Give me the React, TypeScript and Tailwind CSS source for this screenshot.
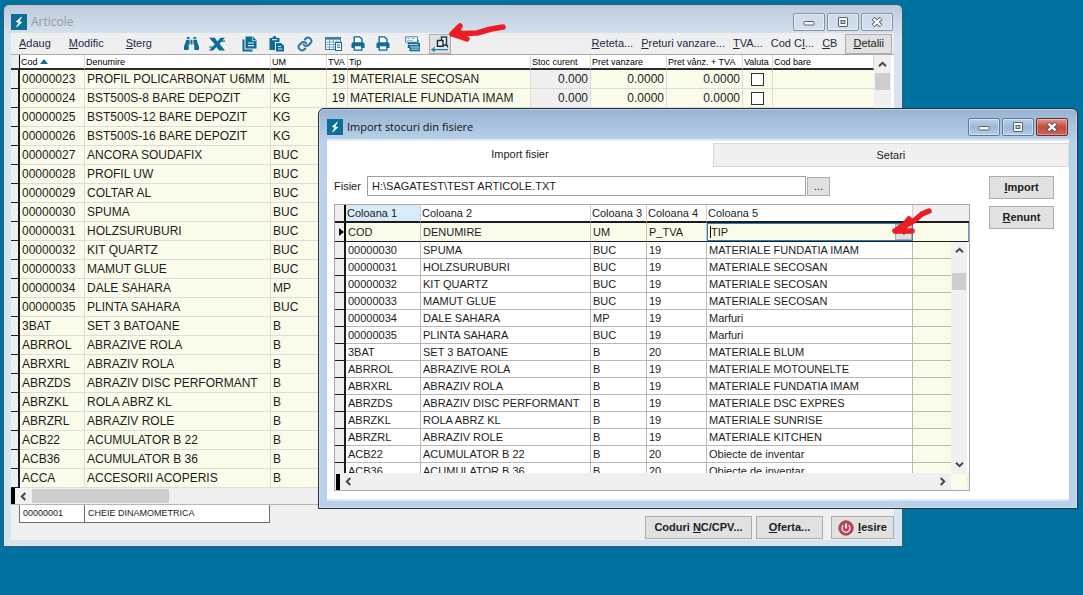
import type { ReactNode } from 'react'
import clsx from 'clsx'
import { FaBinoculars } from 'react-icons/fa'

interface Article {
  code: string
  name: string
  um: string
  vat?: string
  type?: string
  stock?: string
  price?: string
  priceVat?: string
}

interface ImportRow {
  code: string
  name: string
  um: string
  vat: string
  type: string
}

const articles: Article[] = [
  { code: '00000023', name: 'PROFIL POLICARBONAT U6MM', um: 'ML', vat: '19', type: 'MATERIALE SECOSAN', stock: '0.000', price: '0.0000', priceVat: '0.0000' },
  { code: '00000024', name: 'BST500S-8 BARE DEPOZIT', um: 'KG', vat: '19', type: 'MATERIALE FUNDATIA IMAM', stock: '0.000', price: '0.0000', priceVat: '0.0000' },
  { code: '00000025', name: 'BST500S-12 BARE DEPOZIT', um: 'KG' },
  { code: '00000026', name: 'BST500S-16 BARE DEPOZIT', um: 'KG' },
  { code: '00000027', name: 'ANCORA SOUDAFIX', um: 'BUC' },
  { code: '00000028', name: 'PROFIL UW', um: 'BUC' },
  { code: '00000029', name: 'COLTAR AL', um: 'BUC' },
  { code: '00000030', name: 'SPUMA', um: 'BUC' },
  { code: '00000031', name: 'HOLZSURUBURI', um: 'BUC' },
  { code: '00000032', name: 'KIT QUARTZ', um: 'BUC' },
  { code: '00000033', name: 'MAMUT GLUE', um: 'BUC' },
  { code: '00000034', name: 'DALE SAHARA', um: 'MP' },
  { code: '00000035', name: 'PLINTA SAHARA', um: 'BUC' },
  { code: '3BAT', name: 'SET 3 BATOANE', um: 'B' },
  { code: 'ABRROL', name: 'ABRAZIVE ROLA', um: 'B' },
  { code: 'ABRXRL', name: 'ABRAZIV ROLA', um: 'B' },
  { code: 'ABRZDS', name: 'ABRAZIV DISC PERFORMANT', um: 'B' },
  { code: 'ABRZKL', name: 'ROLA ABRZ KL', um: 'B' },
  { code: 'ABRZRL', name: 'ABRAZIV ROLE', um: 'B' },
  { code: 'ACB22', name: 'ACUMULATOR B 22', um: 'B' },
  { code: 'ACB36', name: 'ACUMULATOR B 36', um: 'B' },
  { code: 'ACCA', name: 'ACCESORII ACOPERIS', um: 'B' },
]

const importRows: ImportRow[] = [
  { code: '00000030', name: 'SPUMA', um: 'BUC', vat: '19', type: 'MATERIALE FUNDATIA IMAM' },
  { code: '00000031', name: 'HOLZSURUBURI', um: 'BUC', vat: '19', type: 'MATERIALE SECOSAN' },
  { code: '00000032', name: 'KIT QUARTZ', um: 'BUC', vat: '19', type: 'MATERIALE SECOSAN' },
  { code: '00000033', name: 'MAMUT GLUE', um: 'BUC', vat: '19', type: 'MATERIALE SECOSAN' },
  { code: '00000034', name: 'DALE SAHARA', um: 'MP', vat: '19', type: 'Marfuri' },
  { code: '00000035', name: 'PLINTA SAHARA', um: 'BUC', vat: '19', type: 'Marfuri' },
  { code: '3BAT', name: 'SET 3 BATOANE', um: 'B', vat: '20', type: 'MATERIALE BLUM' },
  { code: 'ABRROL', name: 'ABRAZIVE ROLA', um: 'B', vat: '19', type: 'MATERIALE MOTOUNELTE' },
  { code: 'ABRXRL', name: 'ABRAZIV ROLA', um: 'B', vat: '19', type: 'MATERIALE FUNDATIA IMAM' },
  { code: 'ABRZDS', name: 'ABRAZIV DISC PERFORMANT', um: 'B', vat: '19', type: 'MATERIALE DSC EXPRES' },
  { code: 'ABRZKL', name: 'ROLA ABRZ KL', um: 'B', vat: '19', type: 'MATERIALE SUNRISE' },
  { code: 'ABRZRL', name: 'ABRAZIV ROLE', um: 'B', vat: '19', type: 'MATERIALE KITCHEN' },
  { code: 'ACB22', name: 'ACUMULATOR B 22', um: 'B', vat: '20', type: 'Obiecte de inventar' },
  { code: 'ACB36', name: 'ACUMULATOR B 36', um: 'B', vat: '20', type: 'Obiecte de inventar' },
]

function Logo() {
  return (
    <svg viewBox="0 0 16 16" className="size-4 shrink-0">
      <rect width="16" height="16" fill="#0b6f96" />
      <path d="M10.4 3.2 5.4 7.6l2.8.9-2.6 4.3 5-4.4-2.8-.9z" fill="#fff" stroke="#fff" strokeWidth="0.9" />
    </svg>
  )
}

function CaptionButtons({ active }: { active?: boolean }) {
  const base = clsx(
    'flex h-[18px] w-8 items-center justify-center rounded-xs border shadow-[inset_0_0_0_1px_rgba(255,255,255,0.45)]',
    active
      ? 'border-[#5f7893] bg-linear-to-b from-[#bdd1e8] via-[#9cb8d8] to-[#b3cce8]'
      : 'border-[#8494a8] bg-linear-to-b from-[#cfdbe9] to-[#d3e0ef]',
  )
  return (
    <div className="mr-px flex gap-0.5">
      <button aria-label="Minimize" className={base}>
        <svg viewBox="0 0 12 10" className="h-2.5 w-3">
          <rect x="1" y="4.5" width="10" height="3.5" rx="0.5" fill="#fff" stroke="#59636f" />
        </svg>
      </button>
      <button aria-label="Maximize" className={base}>
        <svg viewBox="0 0 12 10" className="h-2.5 w-3">
          <rect x="1.5" y="0.5" width="9" height="9" rx="0.5" fill="#fff" stroke="#59636f" />
          <rect x="4" y="3.5" width="4" height="3" fill="#b9cbe0" stroke="#59636f" />
        </svg>
      </button>
      <button
        aria-label="Close"
        className={
          active
            ? 'flex h-[18px] w-8 items-center justify-center rounded-xs border border-[#6b2b2b] bg-linear-to-b from-[#dc9a90] via-[#c34b3c] to-[#cf6353] shadow-[inset_0_0_0_1px_rgba(255,255,255,0.35)]'
            : base
        }
      >
        <svg viewBox="0 0 12 10" className="h-2.5 w-3">
          <path d="M2 1.2 10 8.8M10 1.2 2 8.8" stroke="#4d5661" strokeWidth="4" />
          <path d="M2.4 1.6 9.6 8.4M9.6 1.6 2.4 8.4" stroke="#fff" strokeWidth="2.2" />
        </svg>
      </button>
    </div>
  )
}

function Chevron({ dir }: { dir: 'up' | 'down' | 'left' | 'right' }) {
  const paths = {
    up: 'M1 6.3 4.5 2.8 8 6.3',
    down: 'M1 2.7 4.5 6.2 8 2.7',
    left: 'M6.3 1 2.8 4.5 6.3 8',
    right: 'M2.7 1 6.2 4.5 2.7 8',
  }
  return (
    <svg viewBox="0 0 9 9" className="size-[9px]">
      <path d={paths[dir]} fill="none" stroke="#484848" strokeWidth="2" />
    </svg>
  )
}

/* Toolbar icons */

function ExcelIcon() {
  return (
    <svg viewBox="0 0 18 16" className="h-4 w-[18px]">
      <path d="M1 1.8h5.6l3 3.6 2.8-3.6H17l-5.4 6L17 14.5h-5.8l-2.8-3.6-3.2 3.6H1l5.8-6.2z" fill="#0d6c97" />
      <path d="M12.5 5.2H17M1 11h3.6" stroke="#0d6c97" strokeWidth="1.2" />
    </svg>
  )
}

function CopyIcon() {
  return (
    <svg viewBox="0 0 15 16" className="h-4 w-[15px]">
      <path d="M0.5 3.5h2v10h8v2h-10z" fill="#0d6c97" />
      <path d="M3.5 0.5h7.2L14.5 4.3V12.5h-11z" fill="#0d6c97" />
      <path d="M10.4 0.8v3.8h3.8" fill="none" stroke="#efefef" strokeWidth="0.7" />
      <path d="M6 7h6M6 9.7h6" stroke="#efefef" strokeWidth="1.2" />
    </svg>
  )
}

function PasteIcon() {
  return (
    <svg viewBox="0 0 16 16" className="size-4">
      <path d="M0.5 2h3a2 2 0 0 1 4 0h3v4H6v8H0.5z" fill="#0d6c97" />
      <path d="M3 3.7h5" stroke="#efefef" strokeWidth="1.1" />
      <path d="M7 7h5l3 2.8v5.7H7z" fill="#0d6c97" />
      <path d="M9 10.5h3M9 13h4.2" stroke="#efefef" />
    </svg>
  )
}

function LinkIcon() {
  return (
    <svg viewBox="0 0 24 24" className="size-4" fill="none" stroke="#2b77a8" strokeWidth="3" strokeLinecap="round">
      <path d="M10 13a5 5 0 0 0 7.5.5l3-3a5 5 0 0 0-7-7l-1.8 1.7" />
      <path d="M14 11a5 5 0 0 0-7.5-.5l-3 3a5 5 0 0 0 7 7l1.8-1.7" />
    </svg>
  )
}

function GridIcon() {
  return (
    <svg viewBox="0 0 17 15" className="h-[15px] w-[17px]">
      <rect x="0.5" y="1.5" width="15" height="12" fill="#fff" stroke="#3f7fa8" />
      <path d="M0.5 2.5h15" stroke="#3f7fa8" strokeWidth="2.4" />
      <path d="M1 6h14M1 8.5h14M1 11h14M4.5 3v10M8.5 3v10M12 3v10" stroke="#6f9fc0" strokeWidth="0.9" />
      <rect x="10.5" y="6.5" width="6" height="8" fill="#fff" stroke="#0d6c97" />
      <path d="M12 9h3M12 11.3h3" stroke="#0d6c97" />
    </svg>
  )
}

function PrinterIcon() {
  return (
    <svg viewBox="0 0 14 15" className="h-[15px] w-3.5">
      <path d="M3.2 7V0.9h5.4L11 3.3V7" fill="#fff" stroke="#0d6c97" strokeWidth="1.4" />
      <path d="M0.5 8.2Q0.5 6.3 2.2 6.3h9.6q1.7 0 1.7 1.9V12H0.5z" fill="#0d6c97" />
      <rect x="3.2" y="9.7" width="7.6" height="4.4" fill="#fff" stroke="#0d6c97" strokeWidth="1.3" />
    </svg>
  )
}

function StackIcon() {
  return (
    <svg viewBox="0 0 16 16" className="size-4">
      <path d="M4.5 7h10.5v8.3H4.5z" fill="#0d6c97" />
      <path d="M2.8 4h10.8v8H2.8z" fill="#0d6c97" />
      <path d="M0.5 0.8h12v5.4h-12z" fill="#fff" stroke="#4686ab" />
      <path d="M2 2.5h3M6.5 2.5h3M2 4.4h6" stroke="#7aa6c2" strokeWidth="0.8" />
      <path d="M3.5 8.6h9.5M5.5 11h8.8M6 13.2h8.3" stroke="#dfeaf1" strokeWidth="0.9" />
    </svg>
  )
}

function ImportIcon() {
  return (
    <svg viewBox="0 0 18 16" className="h-4 w-[18px]">
      <rect x="10.5" y="1" width="5" height="8" fill="#e9eef2" stroke="#1d3648" strokeWidth="1.4" />
      <path d="M6.5 4.5h5.5v5.8H6.5z" fill="#e9eef2" stroke="#1d2b36" strokeWidth="1.4" />
      <path d="M13.5 9.5h3v2" fill="none" stroke="#1d3648" strokeWidth="1.2" />
      <path d="M1 13.6h16M3.8 11.4 1 13.6l2.8 2" fill="none" stroke="#2e7cb0" strokeWidth="1.3" />
    </svg>
  )
}

function PowerIcon() {
  return (
    <svg viewBox="0 0 16 16" className="size-4">
      <circle cx="8" cy="8" r="7.2" fill="#b8465a" stroke="#a04255" />
      <path d="M5.4 5.2a4 4 0 1 0 5.2 0" fill="none" stroke="#f6e4e7" strokeWidth="1.3" />
      <path d="M8 3.6v4.9" stroke="#fff" strokeWidth="1.8" />
    </svg>
  )
}

/* A label with one underlined access key */
function Key({ text, at = 0 }: { text: string; at?: number }) {
  return (
    <span>
      {text.slice(0, at)}
      <u className="underline-offset-1">{text[at]}</u>
      {text.slice(at + 1)}
    </span>
  )
}

function ToolButton({ label, children }: { label: string; children: ReactNode }) {
  return (
    <button aria-label={label} className="flex h-5 w-[18px] items-center justify-center text-[#0d6c97]">
      {children}
    </button>
  )
}

function PushButton({ children, className }: { children: ReactNode; className?: string }) {
  return (
    <button
      className={clsx(
        'flex h-[23px] items-center justify-center gap-1 border border-[#adadad] bg-[#e1e1e1] text-[11px] font-bold text-[#1c1c1c]',
        className,
      )}
    >
      {children}
    </button>
  )
}

function Toolbar() {
  return (
    <div className="flex h-[21px] items-center justify-between bg-[#efefef] text-[11px] text-[#1b2b4b]">
      <div className="flex items-center">
        <div className="flex gap-[18px] pl-2">
          <button><Key text="Adaug" /></button>
          <button><Key text="Modific" /></button>
          <button className="pl-1"><Key text="Sterg" /></button>
        </div>
        <div className="ml-[30px] flex items-center gap-2">
          <ToolButton label="Cautare"><FaBinoculars size={15} /></ToolButton>
          <ToolButton label="Excel"><ExcelIcon /></ToolButton>
        </div>
        <div className="ml-[14px] flex items-center gap-[10px]">
          <ToolButton label="Copiere"><CopyIcon /></ToolButton>
          <ToolButton label="Lipire"><PasteIcon /></ToolButton>
          <ToolButton label="Legatura"><LinkIcon /></ToolButton>
          <ToolButton label="Tabel"><GridIcon /></ToolButton>
        </div>
        <div className="ml-[7px] flex items-center gap-[7px]">
          <ToolButton label="Tiparire"><PrinterIcon /></ToolButton>
          <ToolButton label="Tiparire lista"><PrinterIcon /></ToolButton>
        </div>
        <div className="ml-3 flex items-center gap-[7px]">
          <ToolButton label="Liste"><StackIcon /></ToolButton>
          <button aria-label="Import" className="flex h-5 w-[22px] items-center justify-center border border-[#adadad] bg-[#e1e1e1]">
            <ImportIcon />
          </button>
        </div>
      </div>
      <div className="flex items-center gap-2 pr-0.5">
        <button><Key text="Reteta..." /></button>
        <button><Key text="Preturi vanzare..." /></button>
        <button><Key text="TVA..." /></button>
        <button><Key text="Cod CI..." at={5} /></button>
        <button><Key text="CB" /></button>
        <button className="h-5 border border-[#adadad] bg-[#e1e1e1] px-[7px] text-[#1c1c1c]"><Key text="Detalii" /></button>
      </div>
    </div>
  )
}

function ArticlesTable() {
  const head = 'border-r border-[#d9d9d9] px-px text-left font-normal'
  const cell = 'border-r border-b border-[#dcdcdc] px-0.5 whitespace-nowrap'
  return (
    <div className="flex bg-[#fbfbe9]">
      <table className="min-w-0 flex-1 table-fixed border-separate border-spacing-0 text-xs text-[#1c1c1c]">
        <colgroup>
          <col className="w-[9px]" />
          <col className="w-[65px]" />
          <col className="w-[186px]" />
          <col className="w-14" />
          <col className="w-[21px]" />
          <col className="w-[183px]" />
          <col className="w-[60px]" />
          <col className="w-[76px]" />
          <col className="w-[76px]" />
          <col className="w-[30px]" />
          <col />
        </colgroup>
        <thead>
          <tr className="h-[15px] bg-white text-[9px] leading-3 whitespace-nowrap text-black *:border-b-2 *:border-b-[#2c2c2c]">
            <th className="border-r border-r-black bg-[#ececec]" aria-label="Selectie" />
            <th className={head}>
              <span className="flex items-center gap-0.5">
                Cod
                <svg viewBox="0 0 8 5" className="h-[5px] w-2"><path d="M0 5 4 0l4 5z" fill="#0b6f96" /></svg>
              </span>
            </th>
            <th className={head}>Denumire</th>
            <th className={head}>UM</th>
            <th className={head}>TVA</th>
            <th className={head}>Tip</th>
            <th className={head}>Stoc curent</th>
            <th className={head}>Pret vanzare</th>
            <th className={head}>Pret vânz. + TVA</th>
            <th className={head}>Valuta</th>
            <th className={head}>Cod bare</th>
          </tr>
        </thead>
        <tbody>
          {articles.map((a) => (
            <tr key={a.code} className="h-[19px] leading-4">
              <td className="border-r-2 border-b border-[#1c1c1c] bg-[#efefef]" />
              <td className={cell}>{a.code}</td>
              <td className={cell}>{a.name}</td>
              <td className={cell}>{a.um}</td>
              <td className={clsx(cell, 'text-right')}>{a.vat}</td>
              <td className={cell}>{a.type}</td>
              <td className={clsx(cell, 'bg-[#f0f0f0] text-right')}>{a.stock}</td>
              <td className={clsx(cell, 'text-right')}>{a.price}</td>
              <td className={clsx(cell, 'text-right')}>{a.priceVat}</td>
              <td className={cell}>
                {a.stock && (
                  <input
                    type="checkbox"
                    aria-label={`Valuta ${a.code}`}
                    className="mx-auto block size-[13px] appearance-none border border-[#333] bg-white"
                  />
                )}
              </td>
              <td className="border-b border-[#dcdcdc]" />
            </tr>
          ))}
        </tbody>
      </table>
      <div className="flex w-[17px] flex-col items-center bg-[#f0f0f0]">
        <div className="flex h-[18px] items-center"><Chevron dir="up" /></div>
        <div className="h-[17px] w-[15px] bg-[#cdcdcd]" />
      </div>
      <div className="w-[3px] bg-white" />
    </div>
  )
}

function ArticlesWindow() {
  return (
    <section className="mr-[180px] ml-[3px] rounded-t-md border border-[#3d5a73] bg-linear-to-b from-[#bccbdc] to-[#d6e3f0] to-[32px] pr-2 pb-[6px] pl-[7px]">
      <header className="flex h-7 items-center justify-between pt-[6px]">
        <h1 className="flex items-center gap-1 font-['Open_Sans',sans-serif] text-[12px] text-[#959ba3]">
          <Logo />
          Articole
        </h1>
        <CaptionButtons />
      </header>
      <div className="bg-[#f0f0f0]">
        <Toolbar />
        <div className="border-t border-[#a9a9a9]">
          <ArticlesTable />
          <div className="flex h-4 items-center bg-[#f0f0f0]">
            <div className="h-4 w-1 bg-black" />
            <div className="flex w-[17px] justify-center"><Chevron dir="left" /></div>
            <div className="h-[14px] w-[137px] bg-[#cdcdcd]" />
          </div>
        </div>
        <div className="flex h-9 justify-between border-t border-[#b5b5b5]">
          <div className="ml-2 flex h-[18px] border-b border-l border-[#6e6e6e] bg-white text-[9px] leading-4 text-[#1c1c1c]">
            <span className="w-[65px] border-r border-[#6e6e6e] pl-[3px]">00000001</span>
            <span className="w-[185px] border-r border-[#6e6e6e] pl-[3px]">CHEIE DINAMOMETRICA</span>
          </div>
          <div className="mt-[11px] flex gap-1">
            <PushButton className="w-[107px]"><Key text="Coduri NC/CPV..." at={7} /></PushButton>
            <PushButton className="w-[67px]"><Key text="Oferta..." /></PushButton>
            <PushButton className="ml-1 w-[63px]"><PowerIcon /><Key text="Iesire" /></PushButton>
          </div>
        </div>
      </div>
    </section>
  )
}

function ImportColumns() {
  return (
    <colgroup>
      <col className="w-[11px]" />
      <col className="w-[75px]" />
      <col className="w-[170px]" />
      <col className="w-14" />
      <col className="w-[60px]" />
      <col className="w-[206px]" />
      <col />
    </colgroup>
  )
}

function ImportGrid() {
  const head = 'border-r border-[#d0d0d0] px-px text-left font-normal'
  const field = 'border-r border-[#c4c4c4] px-0.5'
  const cell = 'border-r border-b border-[#b9b9b9] px-0.5 whitespace-nowrap'
  return (
    <div className="border border-[#a9a9a9] bg-white">
      <table className="w-full table-fixed border-separate border-spacing-0 text-[11px] text-[#1c1c1c]">
        <ImportColumns />
        <thead>
          <tr className="h-[18px] leading-4 whitespace-nowrap *:border-b-2 *:border-b-[#1c1c1c]">
            <th className="border-r-2 border-r-black bg-[#efefef]" aria-label="Selectie" />
            <th className={clsx(head, 'bg-[#d9ebf9]')}>Coloana 1</th>
            <th className={head}>Coloana 2</th>
            <th className={head}>Coloana 3</th>
            <th className={head}>Coloana 4</th>
            <th className={head}>Coloana 5</th>
            <th className="bg-[#efefef]" aria-label="Rest" />
          </tr>
        </thead>
        <tbody>
          <tr className="h-[19px] bg-[#fbfbe9] leading-4 *:border-b *:border-b-[#1c1c1c]">
            <td className="border-r-2 border-r-black bg-[#efefef] p-0">
              <svg viewBox="0 0 5 8" className="ml-auto h-2 w-[5px]"><path d="M0 0 5 4 0 8z" fill="#000" /></svg>
            </td>
            <td className={field}>COD</td>
            <td className={field}>DENUMIRE</td>
            <td className={field}>UM</td>
            <td className={field}>P_TVA</td>
            <td className="p-0">
              <div className="relative border border-[#2f7cc0]">
                <select aria-label="Coloana 5" className="block h-4 w-full appearance-none bg-[#fbfbe9] pl-[3px] leading-4">
                  <option>TIP</option>
                </select>
                <span className="absolute top-0.5 left-0.5 h-3 w-px bg-black" />
                <span className="pointer-events-none absolute inset-y-0 right-0 flex w-[17px] items-center justify-center border border-[#adadad] bg-[#e1e1e1]">
                  <svg viewBox="0 0 8 5" className="h-[5px] w-2"><path d="M1 1l3 3 3-3" fill="none" stroke="#444" strokeWidth="1.4" /></svg>
                </span>
              </div>
            </td>
            <td className="border-r border-r-[#5aa0c8]" />
          </tr>
        </tbody>
      </table>
      <div className="flex h-[231px] overflow-hidden pr-0.5">
        <div className="min-w-0 flex-1">
          <table className="w-full table-fixed border-separate border-spacing-0 text-[11px] text-[#1c1c1c]">
            <ImportColumns />
            <tbody>
              {importRows.map((r) => (
                <tr key={r.code} className="h-[17px] leading-4">
                  <td className="border-r-2 border-b border-[#1c1c1c] bg-[#efefef]" />
                  <td className={cell}>{r.code}</td>
                  <td className={cell}>{r.name}</td>
                  <td className={cell}>{r.um}</td>
                  <td className={cell}>{r.vat}</td>
                  <td className={cell}>{r.type}</td>
                  <td className="border-b border-[#b9b9b9] bg-[#fbfbe9]" />
                </tr>
              ))}
            </tbody>
          </table>
        </div>
        <div className="flex w-4 flex-col items-center bg-[#f0f0f0] py-1">
          <Chevron dir="up" />
          <div className="mt-[18px] h-[17px] w-[14px] bg-[#cdcdcd]" />
          <div className="mt-auto"><Chevron dir="down" /></div>
        </div>
      </div>
      <div className="flex h-[17px] items-center bg-[#f0f0f0] pr-0.5">
        <div className="ml-px h-4 w-1 bg-black" />
        <div className="flex w-4 justify-center"><Chevron dir="left" /></div>
        <div className="mr-1 ml-auto"><Chevron dir="right" /></div>
        <div className="h-4 w-4 bg-[#fbfbe9]" />
      </div>
    </div>
  )
}

function ImportDialog() {
  return (
    <section
      role="dialog"
      aria-labelledby="import-title"
      className="absolute top-[108px] right-[5px] left-[318px] rounded-t-md border border-[#26323e] bg-linear-to-b from-[#98b3d2] to-[#b9d1ea] to-[32px] px-2 pb-[7px] shadow-[inset_0_0_0_1px_rgba(255,255,255,0.35)]"
    >
      <header className="flex h-[30px] items-center justify-between pt-[6px]">
        <h2 id="import-title" className="flex items-center gap-1 font-['Open_Sans',sans-serif] text-[11px] text-[#111]">
          <Logo />
          Import stocuri din fisiere
        </h2>
        <CaptionButtons active />
      </header>
      <div className="border-y-2 border-[#e3e9f1] bg-white">
        <div role="tablist" className="flex text-[11px] text-[#1c1c1c]">
          <button role="tab" aria-selected="true" className="h-[26px] w-[52%] bg-white">Import fisier</button>
          <button role="tab" aria-selected="false" className="mt-0.5 h-6 flex-1 border border-[#d9d9d9] bg-[#f0f0f0]">Setari</button>
        </div>
        <div className="flex items-start justify-between pt-[9px] pr-[15px] pb-2 pl-[7px]">
          <div className="mr-[19px] min-w-0 flex-1">
            <div className="mb-2 flex items-center text-[11px] text-[#1c1c1c]">
              <label htmlFor="file" className="w-[33px]">Fisier</label>
              <input
                id="file"
                defaultValue="H:\SAGATEST\TEST ARTICOLE.TXT"
                className="h-5 min-w-0 flex-1 border border-[#a0a0a0] bg-white px-1"
              />
              <button aria-label="Alege fisier" className="mr-[140px] ml-px h-[19px] w-[23px] border border-[#adadad] bg-[#e1e1e1]">...</button>
            </div>
            <ImportGrid />
          </div>
          <div className="flex w-[65px] flex-col gap-[7px]">
            <PushButton><Key text="Import" /></PushButton>
            <PushButton><Key text="Renunt" /></PushButton>
          </div>
        </div>
      </div>
    </section>
  )
}

function RedArrow({ className, d }: { className: string; d: string }) {
  return (
    <svg viewBox="0 0 64 32" className={clsx('pointer-events-none absolute h-8 w-16', className)}>
      <path d={d} fill="none" stroke="#ec1c24" strokeWidth="5.5" strokeLinecap="round" strokeLinejoin="round" />
    </svg>
  )
}

export default function App() {
  return (
    <main className="relative min-h-screen bg-[#0072a0] pt-1 font-['Liberation_Sans',Arial,sans-serif]">
      <ArticlesWindow />
      <ImportDialog />
      <RedArrow className="top-[19px] left-[446px]" d="M57 8 45 10 31 14 6 15M14 7 6 15l15 5M13 12 9 15l7 2" />
      <RedArrow className="top-[205px] left-[886px]" d="M43 6 36 9 29 15 10 26M23 14 19 19 9 26h17M21 18 15 23" />
    </main>
  )
}
